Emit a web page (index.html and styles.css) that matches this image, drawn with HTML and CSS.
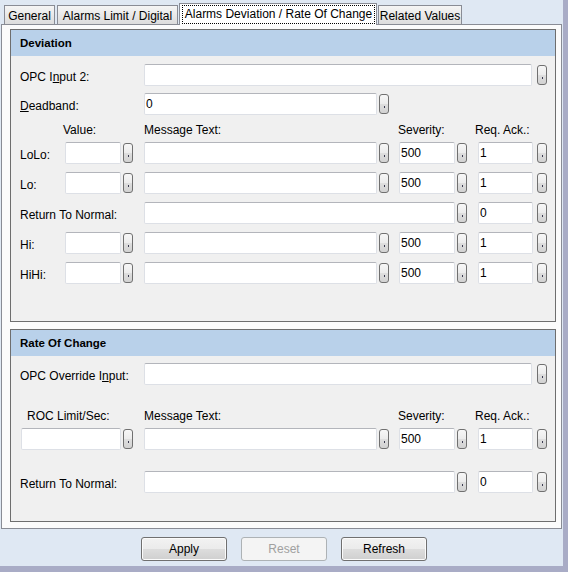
FILE: index.html
```html
<!DOCTYPE html>
<html>
<head>
<meta charset="utf-8">
<link rel="stylesheet" href="styles.css">
</head>
<body>
<div class="window">
  <div class="tabs">
    <div class="tab t-general">General</div>
    <div class="tab t-limit">Alarms Limit / Digital</div>
    <div class="tab t-active"><span class="focus">Alarms Deviation / Rate Of Change</span></div>
    <div class="tab t-related">Related Values</div>
  </div>
  <div class="page">
    <section class="group g1">
      <div class="ghead">Deviation</div>
      <div class="gbody b1">
        <div class="row">
          <div class="lbl span2">OPC I<u>n</u>put 2:</div>
          <div class="fld span3"><input class="tb w388" type="text" value=""><span class="eb ml5"></span></div>
        </div>
        <div class="row mt7">
          <div class="lbl span2"><u>D</u>eadband:</div>
          <div class="fld"><input class="tb w233" type="text" value="0"><span class="eb ml2"></span></div>
        </div>
        <div class="hrow mt8">
          <div></div>
          <div class="hd-value">Value:</div>
          <div>Message Text:</div>
          <div class="hd-sev">Severity:</div>
          <div class="hd-req">Req. Ack.:</div>
        </div>
        <div class="row mt5">
          <div class="lbl">LoLo:</div>
          <div class="fld"><input class="tb w56" type="text" value=""><span class="eb ml2"></span></div>
          <div class="fld"><input class="tb w233" type="text" value=""><span class="eb ml2"></span></div>
          <div class="fld"><input class="tb w56" type="text" value="500"><span class="eb ml2"></span></div>
          <div class="fld"><input class="tb w55" type="text" value="1"><span class="eb ml4"></span></div>
        </div>
        <div class="row mt8">
          <div class="lbl">Lo:</div>
          <div class="fld"><input class="tb w56" type="text" value=""><span class="eb ml2"></span></div>
          <div class="fld"><input class="tb w233" type="text" value=""><span class="eb ml2"></span></div>
          <div class="fld"><input class="tb w56" type="text" value="500"><span class="eb ml2"></span></div>
          <div class="fld"><input class="tb w55" type="text" value="1"><span class="eb ml4"></span></div>
        </div>
        <div class="row mt8">
          <div class="lbl span2">Return To Normal:</div>
          <div class="fld span2"><input class="tb w311" type="text" value=""><span class="eb ml2"></span></div>
          <div class="fld"><input class="tb w55" type="text" value="0"><span class="eb ml4"></span></div>
        </div>
        <div class="row mt8">
          <div class="lbl">Hi:</div>
          <div class="fld"><input class="tb w56" type="text" value=""><span class="eb ml2"></span></div>
          <div class="fld"><input class="tb w233" type="text" value=""><span class="eb ml2"></span></div>
          <div class="fld"><input class="tb w56" type="text" value="500"><span class="eb ml2"></span></div>
          <div class="fld"><input class="tb w55" type="text" value="1"><span class="eb ml4"></span></div>
        </div>
        <div class="row mt8">
          <div class="lbl">HiHi:</div>
          <div class="fld"><input class="tb w56" type="text" value=""><span class="eb ml2"></span></div>
          <div class="fld"><input class="tb w233" type="text" value=""><span class="eb ml2"></span></div>
          <div class="fld"><input class="tb w56" type="text" value="500"><span class="eb ml2"></span></div>
          <div class="fld"><input class="tb w55" type="text" value="1"><span class="eb ml4"></span></div>
        </div>
      </div>
    </section>
    <section class="group g2">
      <div class="ghead">Rate Of Change</div>
      <div class="gbody b2">
        <div class="row">
          <div class="lbl span2">OPC Override I<u>n</u>put:</div>
          <div class="fld span3"><input class="tb w388" type="text" value=""><span class="eb ml5"></span></div>
        </div>
        <div class="hrow mt24">
          <div class="span2 hd-roc">ROC Limit/Sec:</div>
          <div>Message Text:</div>
          <div class="hd-sev">Severity:</div>
          <div class="hd-req">Req. Ack.:</div>
        </div>
        <div class="row mt5">
          <div class="fld span2 ml1"><input class="tb w100" type="text" value=""><span class="eb ml2"></span></div>
          <div class="fld"><input class="tb w233" type="text" value=""><span class="eb ml2"></span></div>
          <div class="fld"><input class="tb w56" type="text" value="500"><span class="eb ml2"></span></div>
          <div class="fld"><input class="tb w55" type="text" value="1"><span class="eb ml4"></span></div>
        </div>
        <div class="row mt21">
          <div class="lbl span2">Return To Normal:</div>
          <div class="fld span2"><input class="tb w311" type="text" value=""><span class="eb ml2"></span></div>
          <div class="fld"><input class="tb w55" type="text" value="0"><span class="eb ml4"></span></div>
        </div>
      </div>
    </section>
  </div>
  <div class="btnbar">
    <button class="btn" type="button">Apply</button>
    <button class="btn disabled" type="button">Reset</button>
    <button class="btn" type="button">Refresh</button>
  </div>
</div>
</body>
</html>
```
FILE: styles.css
```css
* { box-sizing: border-box; }
html, body { margin: 0; padding: 0; }
body {
  width: 568px;
  height: 572px;
  overflow: hidden;
  background: #a9acc6;
  font-family: "Liberation Sans", Arial, sans-serif;
  font-size: 12px;
  color: #000;
}
.window {
  width: 563px;
  height: 566px;
  background: #dfe8f3;
  display: flex;
  flex-direction: column;
}

/* Tabs */
.tabs {
  height: 24px;
  display: flex;
  align-items: flex-end;
  padding-left: 4px;
}
.tab {
  height: 19px;
  border: 1px solid #898c95;
  border-bottom: none;
  background: linear-gradient(#f5f5f5, #e9e9e9 50%, #dcdcdc);
  display: flex;
  align-items: center;
  justify-content: center;
  padding-top: 2px;
  white-space: nowrap;
}
.t-general { width: 51px; }
.t-limit { width: 121px; margin-left: 2px; }
.t-related { width: 84px; margin-left: 1px; }
.t-active {
  width: 198px;
  height: 22px;
  margin-left: 1px;
  margin-bottom: -1px;
  background: #ffffff;
  position: relative;
  z-index: 2;
  padding: 1px 1px 1px 2px;
  align-items: stretch;
}
.focus {
  flex: 1;
  border: 1px dotted #000;
  display: flex;
  align-items: center;
  justify-content: center;
  padding-bottom: 1px;
}

/* Tab page */
.page {
  margin-left: 1px;
  width: 561px;
  height: 505px;
  border: 1px solid #898c95;
  background: #fbfbfb;
  padding: 4px 5px 6px 8px;
  display: flex;
  flex-direction: column;
  gap: 7px;
}
.group {
  border: 1px solid #6e6e6e;
  background: #f0f0f0;
}
.g1 { height: 293px; }
.g2 { height: 193px; }
.ghead {
  height: 26px;
  line-height: 26px;
  background: #b9d1ea;
  padding-left: 9px;
  font-weight: bold;
  font-size: 11.5px;
}
.gbody { padding-left: 9px; }
.b1 { padding-top: 8px; }
.b2 { padding-top: 7px; }

.row, .hrow {
  display: grid;
  grid-template-columns: 45px 79px 255px 79px 69px;
}
.row { height: 22px; }
.hrow { height: 14px; line-height: 14px; white-space: nowrap; }
.mt5 { margin-top: 5px; }
.mt7 { margin-top: 7px; }
.mt8 { margin-top: 8px; }
.mt21 { margin-top: 21px; }
.mt24 { margin-top: 24px; }
.span2 { grid-column: span 2; }
.span3 { grid-column: span 3; }

.lbl {
  line-height: 22px;
  padding-top: 2px;
  white-space: nowrap;
}
.hd-value { margin-left: -2px; }
.hd-sev { margin-left: -1px; }
.hd-req { margin-left: -3px; }
.hd-roc { margin-left: 7px; }

.fld {
  display: flex;
  align-items: center;
  height: 22px;
}
.fld.ml1 { margin-left: 1px; }
.tb {
  height: 22px;
  margin: 0;
  border: 1px solid #dde0e6;
  border-top-color: #b3b5bb;
  border-radius: 2px;
  background: #ffffff;
  padding: 0 1px;
  font-family: inherit;
  font-size: 12px;
  color: #000;
  flex: none;
  outline: none;
}
.w55 { width: 55px; }
.w56 { width: 56px; }
.w100 { width: 100px; }
.w233 { width: 233px; }
.w311 { width: 311px; }
.w388 { width: 388px; }

.eb {
  flex: none;
  width: 10px;
  height: 20px;
  border: 1px solid #707070;
  border-radius: 3px;
  background: linear-gradient(#f7f7f7, #ececec 48%, #dedede 52%, #d2d2d2);
  display: flex;
  justify-content: center;
  align-items: flex-end;
  padding-bottom: 5px;
}
.eb::after {
  content: "";
  display: block;
  width: 1px;
  height: 2px;
  background: #3a3a50;
}
.ml2 { margin-left: 2px; }
.ml4 { margin-left: 4px; }
.ml5 { margin-left: 5px; }

/* Bottom buttons */
.btnbar {
  flex: 1;
  display: flex;
  gap: 14px;
  padding: 8px 0 0 141px;
}
.btn {
  width: 86px;
  height: 24px;
  margin: 0;
  padding: 0;
  border: 1px solid #707070;
  border-radius: 3px;
  background: linear-gradient(#f2f2f2, #ebebeb 50%, #dddddd 50%, #cfcfcf);
  box-shadow: inset 0 0 0 1px #fbfbfb;
  font-family: inherit;
  font-size: 12px;
  color: #000;
}
.btn.disabled {
  border-color: #adb2b5;
  background: #f4f4f4;
  box-shadow: none;
  color: #a0a0a0;
}
```
